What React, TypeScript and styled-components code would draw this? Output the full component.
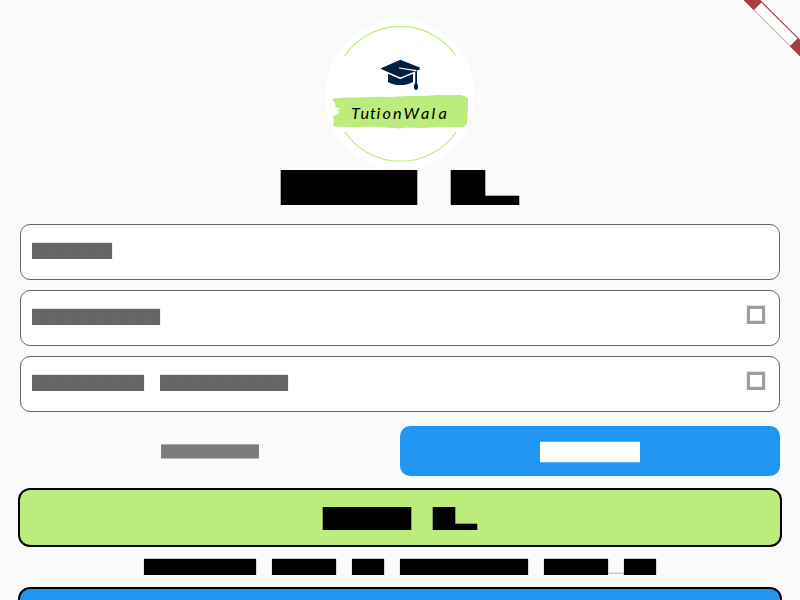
import React from "react";
import styled, { createGlobalStyle } from "styled-components";

const GlobalStyle = createGlobalStyle`
  * { box-sizing: border-box; }
  html, body { margin: 0; height: 100%; overflow: hidden; background: #fafafa; }
  body { font-family: Lato, "Liberation Sans", sans-serif; }
`;

const Screen = styled.main`
  position: relative;
  width: 800px;
  height: 600px;
  padding: 20px 20px 0;
  overflow: hidden;
  display: flex;
  flex-direction: column;
  background: #fafafa;
`;

const LogoImage = styled.svg`
  display: block;
  flex: none;
  align-self: center;
  width: 150px;
  height: 150px;
`;

const LogoText = styled.text`
  font: italic 400 16.3px Lato, sans-serif;
  font-variant-ligatures: none;
  fill: #000;
`;

const Ribbon = styled.svg`
  position: absolute;
  top: 0;
  right: 0;
  width: 60px;
  height: 60px;
`;

const Words = styled.div<{ $gap: number }>`
  display: flex;
  align-items: flex-end;
  gap: ${(p) => p.$gap}px;
`;

const Word = styled.span<{ $cell: number; $count: number; $height?: number; $color?: string; $seam?: string; $edge?: string }>`
  display: block;
  flex: none;
  width: ${(p) => p.$cell * p.$count}px;
  height: ${(p) => p.$height ?? p.$cell}px;
  background: ${(p) =>
    p.$seam
      ? `repeating-linear-gradient(90deg, ${p.$color} 0 ${p.$cell - 1}px, ${p.$seam} ${p.$cell - 1}px ${p.$cell}px)`
      : p.$color ?? "#000"};
  box-shadow: ${(p) => p.$edge ?? "none"};
`;

const Joined = styled.div`
  display: flex;
  align-items: flex-end;
`;

const TitleRow = styled.header`
  display: flex;
  justify-content: center;
  height: 35px;
  margin-bottom: 19px;
  flex: none;
`;

const Fields = styled.div`
  display: flex;
  flex-direction: column;
  gap: 10px;
  flex: none;
`;

const Field = styled.div`
  display: flex;
  justify-content: space-between;
  align-items: flex-start;
  height: 56px;
  padding: 18px 14px 0 11px;
  border: 1px solid #666;
  border-radius: 10px;
  background: #fff;
`;

const Toggle = styled.span`
  width: 18px;
  height: 18px;
  margin-top: -3px;
  border: 3px solid #9e9e9e;
  box-shadow: 0 -1px #e1e1e1, -1px 0 #eee, 1px 0 #eee, inset 0 -1px #e7e7e7;
`;

const Actions = styled.div`
  display: grid;
  grid-template-columns: 1fr 1fr;
  height: 50px;
  margin-top: 14px;
  flex: none;
`;

const Choice = styled.div<{ $active?: boolean }>`
  display: flex;
  justify-content: center;
  padding-top: ${(p) => (p.$active ? 16 : 19)}px;
  border-radius: 10px;
  background: ${(p) => (p.$active ? "#2196f3" : "transparent")};
`;

const WideButton = styled.div<{ $fill: string }>`
  display: flex;
  justify-content: center;
  align-items: flex-start;
  flex: none;
  height: 59px;
  margin: 0 -2px;
  padding-top: 17px;
  border: 2px solid #000;
  border-radius: 12px;
  background: ${(p) => p.$fill};
`;

const SubmitArea = styled.div`
  margin-top: 12px;
`;

const Footnote = styled.div`
  display: flex;
  justify-content: center;
  height: 16px;
  margin: 12px 0;
  flex: none;
`;

const Underscore = styled.span`
  width: 16px;
  height: 2px;
  margin-bottom: 1px;
  background: linear-gradient(#e2e2e2 50%, #cacaca 50%);
`;

const sideEdge = "-1px 0 rgba(0,0,0,.3), 1px 0 rgba(0,0,0,.3)";
const topEdge = "0 -1px rgba(0,0,0,.12), 1px 0 rgba(0,0,0,.06)";
const noteEdge = "0 -1px rgba(0,0,0,.18), -1px 0 rgba(0,0,0,.08), 1px 0 rgba(0,0,0,.14)";

function Heading({ cell, foot, height }: { cell: number; foot: number; height: number }) {
  return (
    <Words $gap={cell}>
      <Word $cell={cell} $count={4} $height={height} $edge={sideEdge} />
      <Joined>
        <Word $cell={cell} $count={1} $height={height} $edge={sideEdge} />
        <Word $cell={cell} $count={1} $height={foot} $edge="0 -1px rgba(0,0,0,.3), 1px 0 rgba(0,0,0,.3)" />
      </Joined>
    </Words>
  );
}

function FormField({ words, toggle }: { words: number[]; toggle?: boolean }) {
  return (
    <Field>
      <Words $gap={16}>
        {words.map((count, i) => (
          <Word key={i} $cell={16} $count={count} $color="#666" $seam="#626262" $edge={topEdge} />
        ))}
      </Words>
      {toggle && <Toggle />}
    </Field>
  );
}

function Logo() {
  return (
    <LogoImage viewBox="325 20 150 150">
      <circle cx="400" cy="95" r="75" fill="#fff" />
      <g fill="none" stroke="#bbec7c" strokeWidth="1.15">
        <path d="M344.8 55.6A67.6 67.6 0 0 1 456 55.6" />
        <path d="M344.8 132A67.6 67.6 0 0 0 456.2 132" />
      </g>
      <path
        fill="#bbec7c"
        d="M332.3 99.5Q336 97.4 344 97.8L365 97.2 379 96.8 392 96.9 407 96 423 95.9 439 95.1 460 95.1Q467 96.2 468 99L467.8 109 467.3 122Q466.8 126.6 461 127.3L441 127.1 423 128 407 127.5 400 128.5 385 127.5 369 127.2 356 127.2 334 126.5 333 124 334 121 333 116 337 114.5 340 111.5 336.5 111 339.8 108.7 335.5 107 335.3 103.6Z"
      />
      <path d="M365 128l2-1.4 1 1.4 3-1.6 0 2 4-1.6 1 1.6 3-1.6 2 1.6 4-1.2" fill="none" stroke="#fff" strokeWidth=".6" />
      <g fill="#002044">
        <path d="M400.3 59.8L419.8 67.4V69.4L400.3 77.6 381 69.1V68.2Z" />
        <path d="M388 73.6L400.3 79 413 73.6V82Q408 85.1 400.3 85.1T388 82Z" />
        <path d="M415.2 70h1.8v13.2l1 1.8v3l-1 2h-2l-1-2v-3l1.2-1.8Z" />
      </g>
      <path d="M387.8 73.2L400.3 78.4 413 73.2" fill="none" stroke="#fff" strokeWidth=".9" />
      <path d="M399.4 68L416 70.6" fill="none" stroke="#fff" strokeWidth="1.2" strokeLinecap="round" />
      <LogoText x="351 360.5 370 376.5 382.5 393 403.5 421 431.5 438.5" y="119">
        TutionWala
      </LogoText>
    </LogoImage>
  );
}

export default function App() {
  return (
    <>
      <GlobalStyle />
      <Screen>
        <Ribbon viewBox="740 0 60 60">
          <g transform="translate(800 0) rotate(45)">
            <rect x="-40" y="28" width="80" height="12" fill="#a33f3f" />
            <rect x="-25.5" y="29.1" width="51" height="10.2" fill="#fff" />
            <path d="M-25.5 39.65H25.5" stroke="#dcc0c0" strokeWidth=".8" />
            <path d="M-15.3 29.1v10.2M-5.1 29.1v10.2M5.1 29.1v10.2M15.3 29.1v10.2" stroke="#f4e9e9" strokeWidth=".4" />
          </g>
        </Ribbon>
        <Logo />
        <TitleRow>
          <Heading cell={34} height={35} foot={9} />
        </TitleRow>
        <Fields>
          <FormField words={[5]} />
          <FormField words={[8]} toggle />
          <FormField words={[7, 8]} toggle />
        </Fields>
        <Actions>
          <Choice>
            <Word $cell={14} $count={7} $height={13} $color="#7c7c7c" $edge="0 -1px #acacac, 0 1px #bababa" />
          </Choice>
          <Choice $active>
            <Word $cell={20} $count={5} $color="#fff" $edge="0 -1px rgba(255,255,255,.25), 0 1px rgba(255,255,255,.25)" />
          </Choice>
        </Actions>
        <SubmitArea>
          <WideButton $fill="#bbec7c">
            <Heading cell={22} height={23} foot={6} />
          </WideButton>
        </SubmitArea>
        <Footnote>
          <Words $gap={16}>
            {[7, 4, 2, 8].map((count, i) => (
              <Word key={i} $cell={16} $count={count} $edge={noteEdge} />
            ))}
            <Joined>
              <Word $cell={16} $count={4} $edge={noteEdge} />
              <Underscore />
              <Word $cell={16} $count={2} $edge={noteEdge} />
            </Joined>
          </Words>
        </Footnote>
        <WideButton $fill="#2196f3" />
      </Screen>
    </>
  );
}
